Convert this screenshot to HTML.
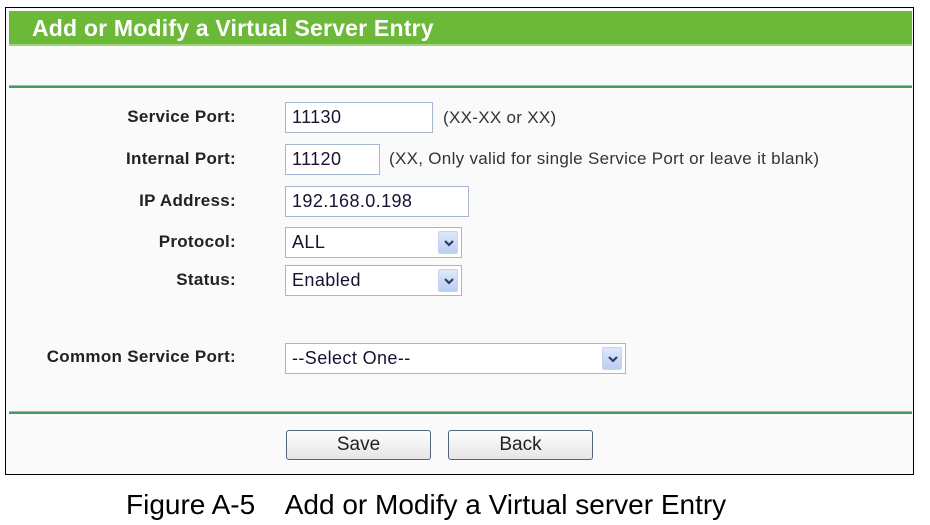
<!DOCTYPE html>
<html><head><meta charset="utf-8"><style>
*{margin:0;padding:0;box-sizing:border-box}
body{width:930px;height:525px;background:#fff;position:relative;font-family:"Liberation Sans",Arial,sans-serif;overflow:hidden}
.a{position:absolute}
#frame{left:5px;top:7px;width:909px;height:468px;border:1.5px solid #000;background:#fafafa}
#hdr{left:9px;top:11px;width:903px;height:35px;background:#6cb93a;border-bottom:2px solid #9ed47a}
#hdr span{position:absolute;left:23px;top:4px;color:#fff;font-weight:bold;font-size:23px;letter-spacing:0.2px}
.line{left:9px;width:903px;height:3px;background:#4a9a5a;border-top:1px solid #8cc49a}
.lbl{font-weight:bold;font-size:17px;color:#222;text-align:right;width:230px;left:6px;letter-spacing:0.3px}
.inp{border:1.5px solid #a7b6cc;background:#fff;font-size:18px;color:#1a1030;padding-left:6px;line-height:28px;letter-spacing:0.4px}
.sel .arr{position:absolute;right:3px;top:3px;width:20px;height:23px;background:linear-gradient(#dfe8fb,#bccdf1);border:1px solid #c8d4ef;border-radius:2px}
.sel .arr svg{position:absolute;left:5px;top:7px}
.hint{font-size:17px;color:#333;letter-spacing:0.3px;white-space:nowrap}
.btn{border:1.5px solid #55657a;border-radius:3px;background:linear-gradient(#fdfdfd,#e6e6e6);font-size:19px;color:#222;text-align:center;line-height:27px}
</style></head><body>
<div class="a" id="frame"></div>
<div class="a" id="hdr"><span>Add or Modify a Virtual Server Entry</span></div>
<div class="a line" style="top:85px"></div>
<div class="a line" style="top:411px"></div>

<div class="a lbl" style="top:107px">Service Port:</div>
<div class="a inp" style="left:285px;top:102px;width:148px;height:31px">11130</div>
<div class="a hint" style="left:443px;top:108px">(XX-XX or XX)</div>

<div class="a lbl" style="top:149px">Internal Port:</div>
<div class="a inp" style="left:285px;top:144px;width:95px;height:31px">11120</div>
<div class="a hint" style="left:389px;top:149px">(XX, Only valid for single Service Port or leave it blank)</div>

<div class="a lbl" style="top:191px">IP Address:</div>
<div class="a inp" style="left:285px;top:186px;width:184px;height:31px">192.168.0.198</div>

<div class="a lbl" style="top:232px">Protocol:</div>
<div class="a inp sel" style="left:285px;top:227px;width:177px;height:31px">ALL<div class="arr"><svg width="10" height="8"><path d="M1 2L5 6L9 2" stroke="#2a3e6a" stroke-width="2.2" fill="none"/></svg></div></div>

<div class="a lbl" style="top:270px">Status:</div>
<div class="a inp sel" style="left:285px;top:265px;width:177px;height:31px">Enabled<div class="arr"><svg width="10" height="8"><path d="M1 2L5 6L9 2" stroke="#2a3e6a" stroke-width="2.2" fill="none"/></svg></div></div>

<div class="a lbl" style="top:347px">Common Service Port:</div>
<div class="a inp sel" style="left:285px;top:343px;width:341px;height:31px">--Select One--<div class="arr"><svg width="10" height="8"><path d="M1 2L5 6L9 2" stroke="#2a3e6a" stroke-width="2.2" fill="none"/></svg></div></div>

<div class="a btn" style="left:286px;top:430px;width:145px;height:30px">Save</div>
<div class="a btn" style="left:448px;top:430px;width:145px;height:30px">Back</div>

<div class="a" style="left:126px;top:489px;font-size:28px;color:#000;white-space:pre">Figure A-5    Add or Modify a Virtual server Entry</div>
</body></html>
